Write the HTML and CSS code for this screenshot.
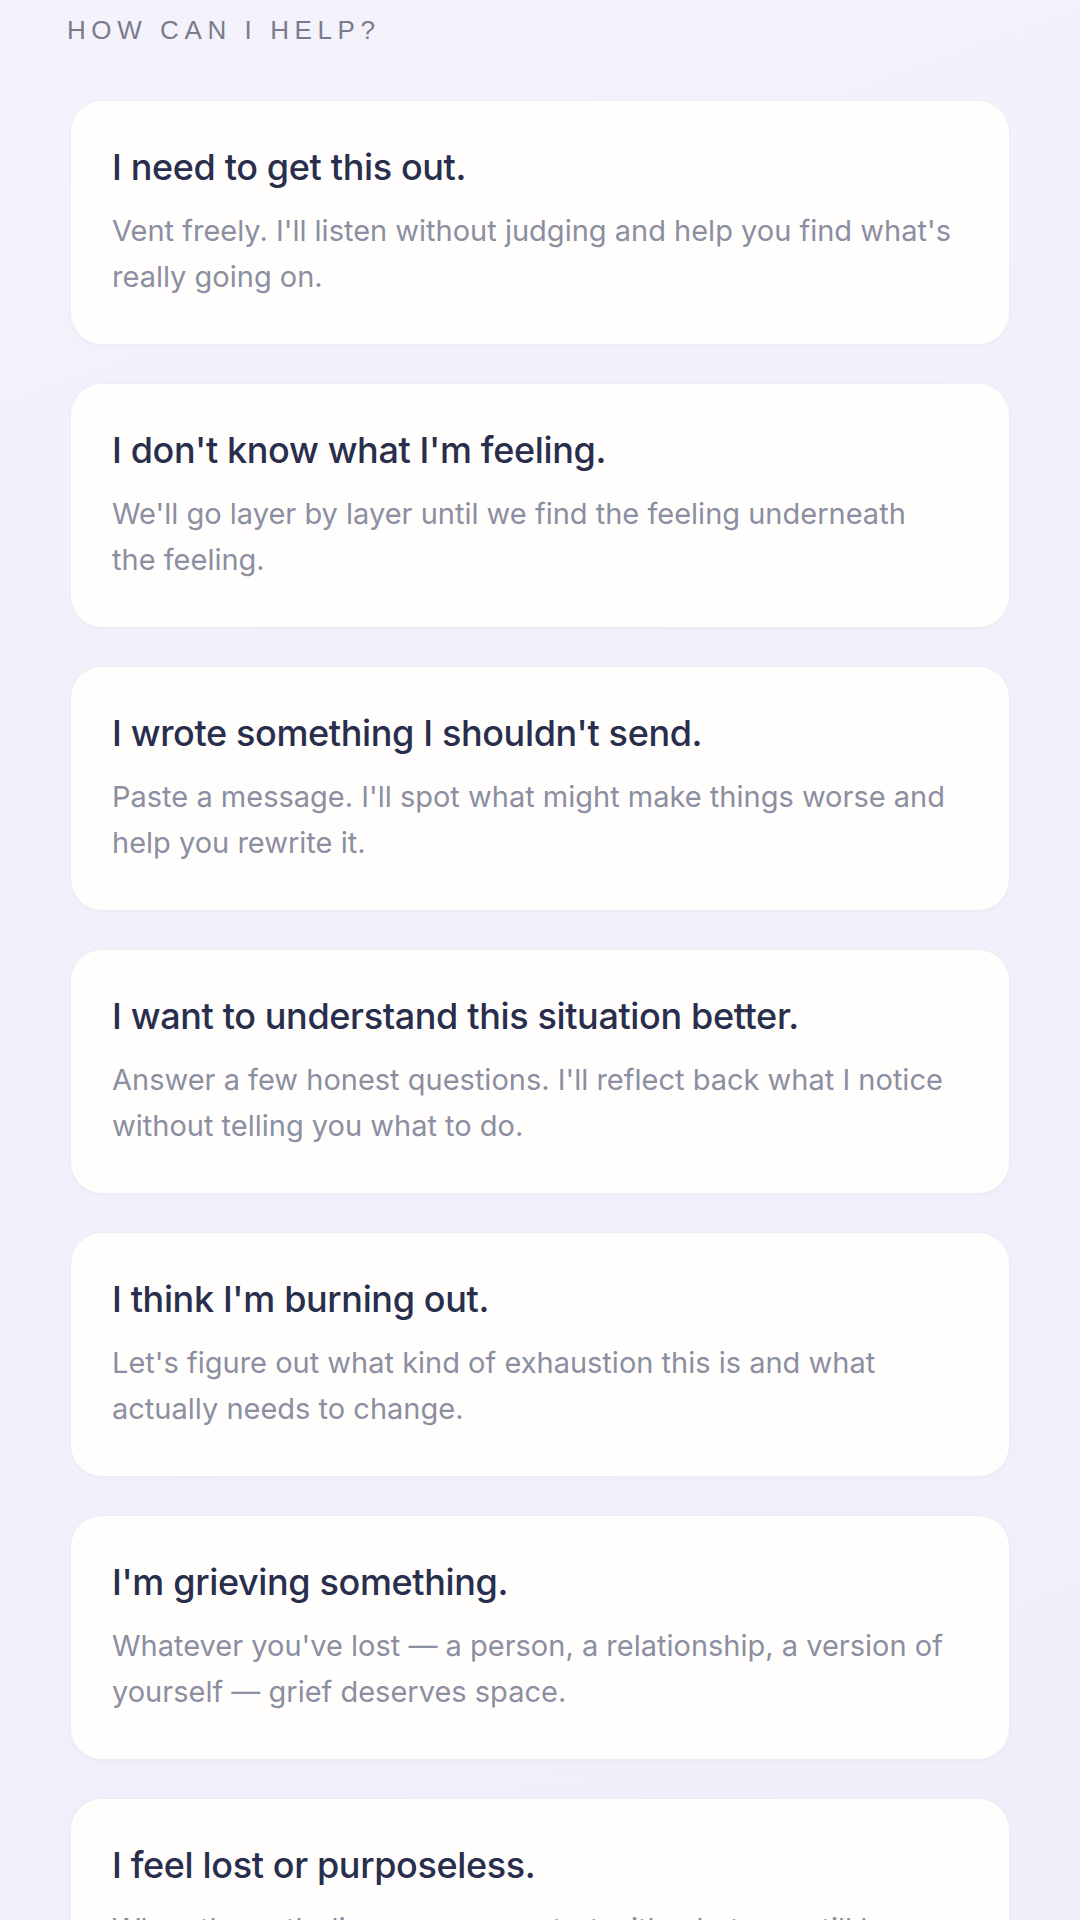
FILE: index.html
```html
<!DOCTYPE html>
<html>
<head>
<meta charset="utf-8">
<link rel="stylesheet" href="styles.css">
</head>
<body>
<main class="page">
  <h2 class="section-label">HOW CAN I HELP?</h2>
  <div class="options">
    <div class="card">
      <div class="card-title">I need to get this out.</div>
      <div class="card-desc">Vent freely. I'll listen without judging and help you find what's really going on.</div>
    </div>
    <div class="card">
      <div class="card-title">I don't know what I'm feeling.</div>
      <div class="card-desc">We'll go layer by layer until we find the feeling underneath the feeling.</div>
    </div>
    <div class="card">
      <div class="card-title">I wrote something I shouldn't send.</div>
      <div class="card-desc">Paste a message. I'll spot what might make things worse and help you rewrite it.</div>
    </div>
    <div class="card">
      <div class="card-title">I want to understand this situation better.</div>
      <div class="card-desc">Answer a few honest questions. I'll reflect back what I notice without telling you what to do.</div>
    </div>
    <div class="card">
      <div class="card-title">I think I'm burning out.</div>
      <div class="card-desc">Let's figure out what kind of exhaustion this is and what actually needs to change.</div>
    </div>
    <div class="card">
      <div class="card-title">I'm grieving something.</div>
      <div class="card-desc">Whatever you've lost — a person, a relationship, a version of yourself — grief deserves space.</div>
    </div>
    <div class="card">
      <div class="card-title">I feel lost or purposeless.</div>
      <div class="card-desc">When the path disappears, we start with what you still have and find the next step.</div>
    </div>
  </div>
</main>
</body>
</html>
```

FILE: styles.css
```css
html, body {
  margin: 0;
  padding: 0;
}
body {
  width: 1080px;
  height: 1920px;
  overflow: hidden;
  background: linear-gradient(160deg, #f4f2fb 0%, #f1f0fb 50%, #efeefb 100%);
  font-family: Inter, "Noto Sans", sans-serif;
}
.page {
  padding: 0 70px;
}
.section-label {
  margin: 0 0 0 -3px;
  padding: 12px 0 0 0;
  font-family: "Liberation Sans", Arial, sans-serif;
  font-weight: 400;
  font-size: 26px;
  line-height: 36px;
  letter-spacing: 0.215em;
  color: #7b7b8d;
}
.options {
  display: flex;
  flex-direction: column;
  gap: 38px;
  margin-top: 52px;
}
.card {
  box-sizing: border-box;
  height: 245px;
  background: #fffefc;
  border: 1.5px solid #efecf3;
  border-radius: 32px;
  padding: 43px 56px 0 41px;
  box-shadow: 0 1px 3px rgba(120, 110, 160, 0.04);
}
.card-title {
  font-size: 36px;
  font-weight: 500;
  line-height: 46px;
  color: #282e4c;
  letter-spacing: -0.01em;
}
.card-desc {
  margin-top: 18px;
  font-size: 29px;
  line-height: 46px;
  color: #8b8fa1;
  letter-spacing: 0;
}
```
